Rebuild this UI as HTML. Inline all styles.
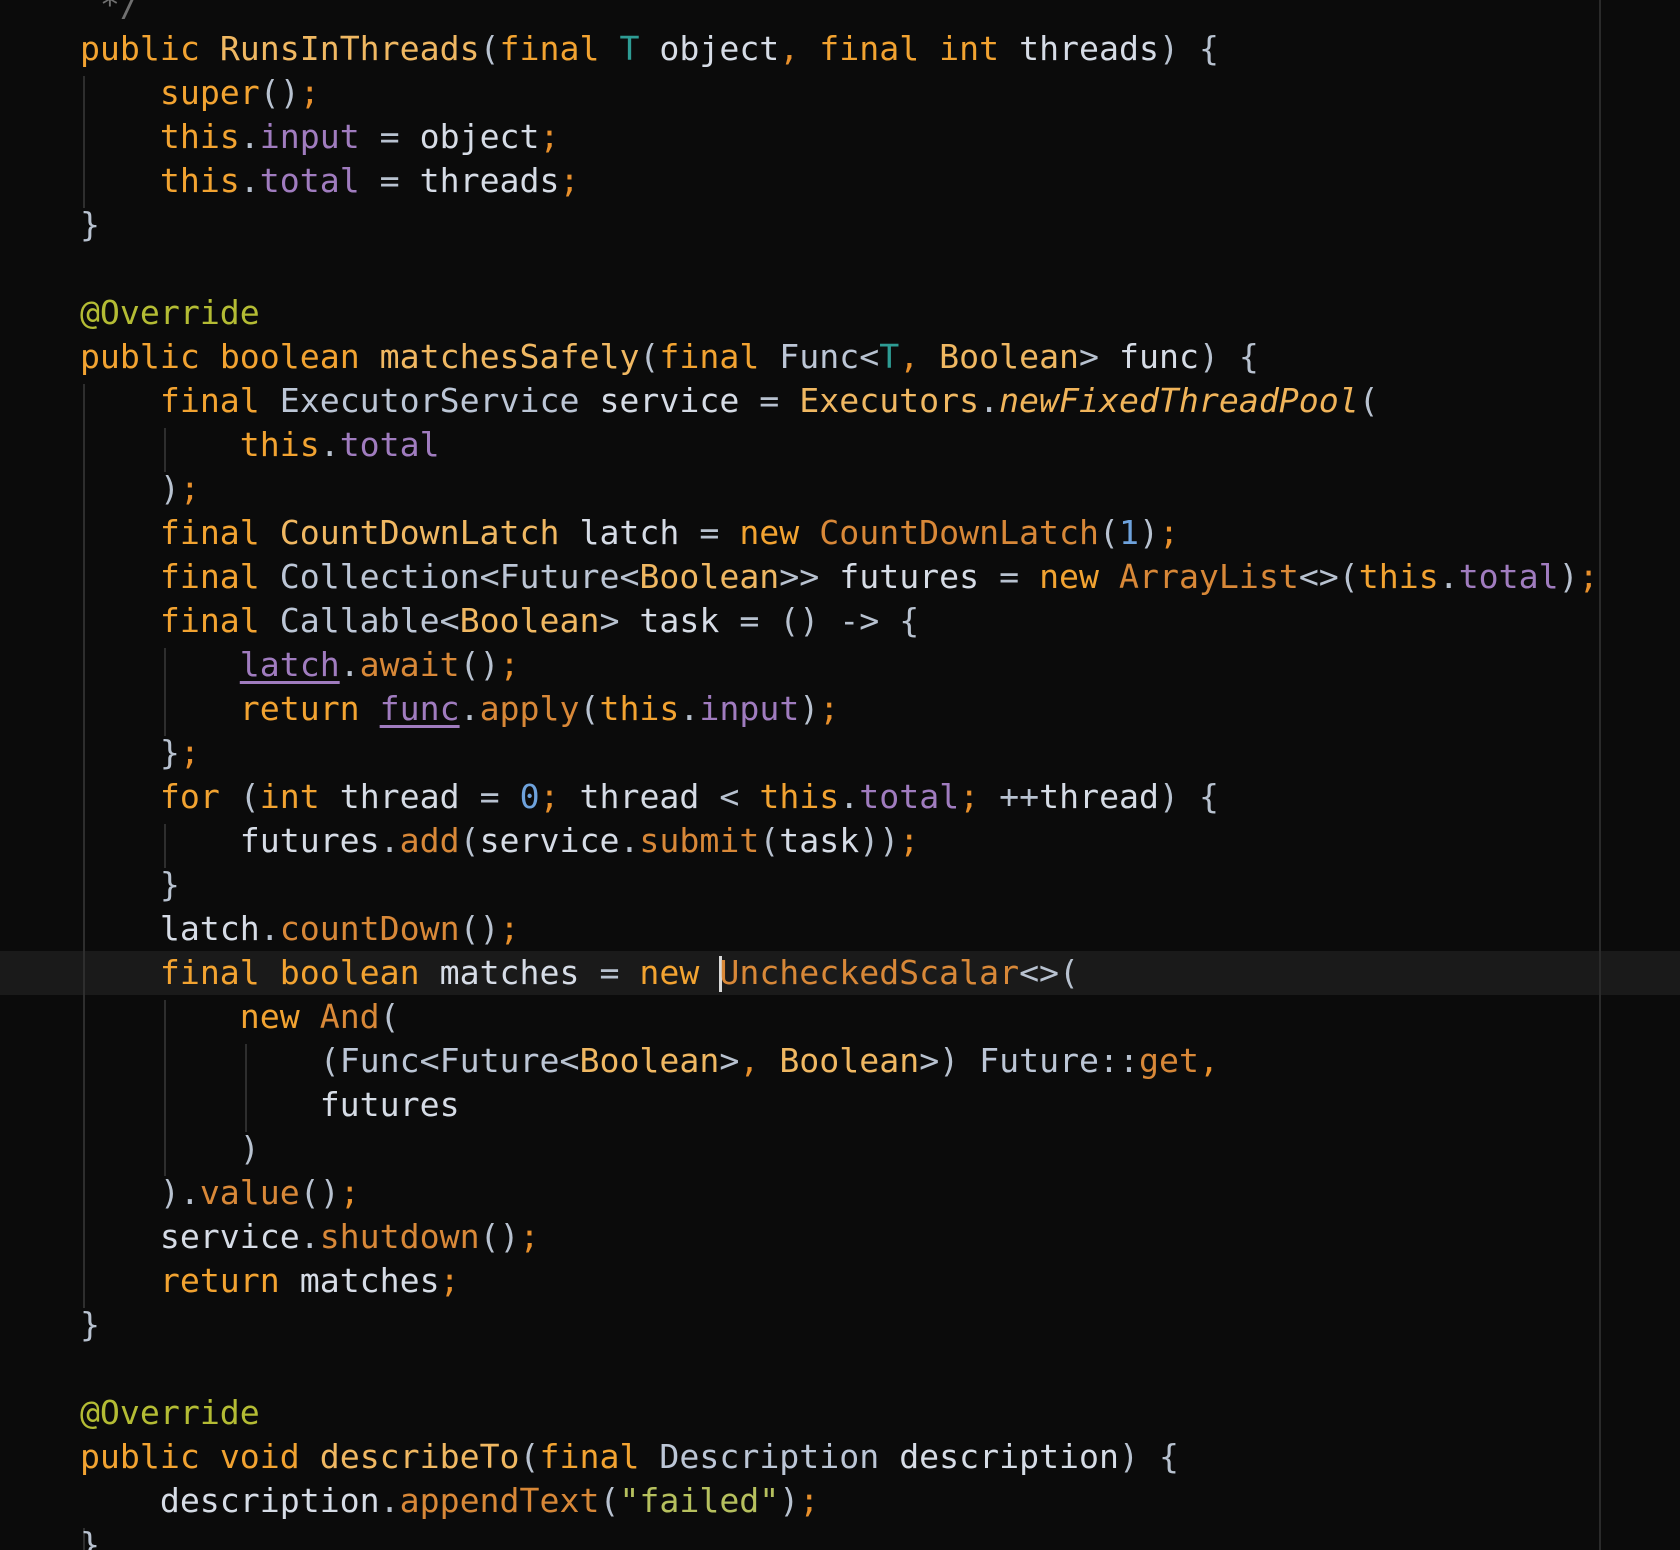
<!DOCTYPE html>
<html><head><meta charset="utf-8"><style>
html,body{margin:0;padding:0;background:#0b0b0b;width:1680px;height:1550px;overflow:hidden;position:relative}
#code{position:absolute;left:0;top:-17px;margin:0;font-family:"DejaVu Sans Mono","Liberation Mono",monospace;font-size:33.2px;line-height:44px;color:#d6dce6;white-space:pre}
.k{color:#f2a331}.c{color:#f0b862}.i{color:#bcc6d6}.f{color:#a07cbf}.m{color:#d88838}.p{color:#b8c2d0}.s{color:#e8902c}.n{color:#6ea2dc}.a{color:#b4bc34}.t{color:#2e9c94}.it{color:#f0b45a;font-style:italic}.g{color:#707070}.str{color:#b6c05e}
.u{text-decoration:underline;text-underline-offset:5px;color:#a07cbf}
.guide{position:absolute;width:2px;background:#2e2e2e}
#hl{position:absolute;left:0;top:951px;width:1680px;height:44px;background:#1a1a1a}
#margin{position:absolute;left:1599px;top:0;width:2px;height:1550px;background:#2a2a2a}
#cur{position:absolute;left:719px;top:956px;width:3px;height:36px;background:#d8d8d8}
</style></head><body>
<div id="hl"></div>
<div id="margin"></div>
<div class="guide" style="left:83px;top:76px;height:132px"></div>
<div class="guide" style="left:83px;top:384px;height:924px"></div>
<div class="guide" style="left:164px;top:428px;height:44px"></div>
<div class="guide" style="left:164px;top:648px;height:88px"></div>
<div class="guide" style="left:164px;top:824px;height:44px"></div>
<div class="guide" style="left:164px;top:1000px;height:176px"></div>
<div class="guide" style="left:245px;top:1044px;height:88px"></div>
<div class="guide" style="left:83px;top:1528px;height:30px"></div>
<div id="cur"></div>
<pre id="code"><span class="g">     */</span>
    <span class="k">public</span> <span class="c">RunsInThreads</span><span class="p">(</span><span class="k">final</span> <span class="t">T</span> object<span class="s">,</span> <span class="k">final</span> <span class="k">int</span> threads<span class="p">)</span> <span class="p">{</span>
        <span class="k">super</span><span class="p">()</span><span class="s">;</span>
        <span class="k">this</span><span class="p">.</span><span class="f">input</span> <span class="p">=</span> object<span class="s">;</span>
        <span class="k">this</span><span class="p">.</span><span class="f">total</span> <span class="p">=</span> threads<span class="s">;</span>
    <span class="p">}</span>

    <span class="a">@Override</span>
    <span class="k">public</span> <span class="k">boolean</span> <span class="c">matchesSafely</span><span class="p">(</span><span class="k">final</span> <span class="i">Func</span><span class="p">&lt;</span><span class="t">T</span><span class="s">,</span> <span class="c">Boolean</span><span class="p">&gt;</span> func<span class="p">)</span> <span class="p">{</span>
        <span class="k">final</span> <span class="i">ExecutorService</span> service <span class="p">=</span> <span class="c">Executors</span><span class="p">.</span><span class="it">newFixedThreadPool</span><span class="p">(</span>
            <span class="k">this</span><span class="p">.</span><span class="f">total</span>
        <span class="p">)</span><span class="s">;</span>
        <span class="k">final</span> <span class="c">CountDownLatch</span> latch <span class="p">=</span> <span class="k">new</span> <span class="m">CountDownLatch</span><span class="p">(</span><span class="n">1</span><span class="p">)</span><span class="s">;</span>
        <span class="k">final</span> <span class="i">Collection</span><span class="p">&lt;</span><span class="i">Future</span><span class="p">&lt;</span><span class="c">Boolean</span><span class="p">&gt;&gt;</span> futures <span class="p">=</span> <span class="k">new</span> <span class="m">ArrayList</span><span class="p">&lt;&gt;(</span><span class="k">this</span><span class="p">.</span><span class="f">total</span><span class="p">)</span><span class="s">;</span>
        <span class="k">final</span> <span class="i">Callable</span><span class="p">&lt;</span><span class="c">Boolean</span><span class="p">&gt;</span> task <span class="p">=</span> <span class="p">()</span> <span class="p">-&gt;</span> <span class="p">{</span>
            <span class="u">latch</span><span class="p">.</span><span class="m">await</span><span class="p">()</span><span class="s">;</span>
            <span class="k">return</span> <span class="u">func</span><span class="p">.</span><span class="m">apply</span><span class="p">(</span><span class="k">this</span><span class="p">.</span><span class="f">input</span><span class="p">)</span><span class="s">;</span>
        <span class="p">}</span><span class="s">;</span>
        <span class="k">for</span> <span class="p">(</span><span class="k">int</span> thread <span class="p">=</span> <span class="n">0</span><span class="s">;</span> thread <span class="p">&lt;</span> <span class="k">this</span><span class="p">.</span><span class="f">total</span><span class="s">;</span> <span class="p">++</span>thread<span class="p">)</span> <span class="p">{</span>
            futures<span class="p">.</span><span class="m">add</span><span class="p">(</span>service<span class="p">.</span><span class="m">submit</span><span class="p">(</span>task<span class="p">))</span><span class="s">;</span>
        <span class="p">}</span>
        latch<span class="p">.</span><span class="m">countDown</span><span class="p">()</span><span class="s">;</span>
        <span class="k">final</span> <span class="k">boolean</span> matches <span class="p">=</span> <span class="k">new</span> <span class="m">UncheckedScalar</span><span class="p">&lt;&gt;(</span>
            <span class="k">new</span> <span class="m">And</span><span class="p">(</span>
                <span class="p">(</span><span class="i">Func</span><span class="p">&lt;</span><span class="i">Future</span><span class="p">&lt;</span><span class="c">Boolean</span><span class="p">&gt;</span><span class="s">,</span> <span class="c">Boolean</span><span class="p">&gt;)</span> <span class="i">Future</span><span class="p">::</span><span class="m">get</span><span class="s">,</span>
                futures
            <span class="p">)</span>
        <span class="p">).</span><span class="m">value</span><span class="p">()</span><span class="s">;</span>
        service<span class="p">.</span><span class="m">shutdown</span><span class="p">()</span><span class="s">;</span>
        <span class="k">return</span> matches<span class="s">;</span>
    <span class="p">}</span>

    <span class="a">@Override</span>
    <span class="k">public</span> <span class="k">void</span> <span class="c">describeTo</span><span class="p">(</span><span class="k">final</span> <span class="i">Description</span> description<span class="p">)</span> <span class="p">{</span>
        description<span class="p">.</span><span class="m">appendText</span><span class="p">(</span><span class="str">"failed"</span><span class="p">)</span><span class="s">;</span>
    <span class="p">}</span>
</pre>
</body></html>
